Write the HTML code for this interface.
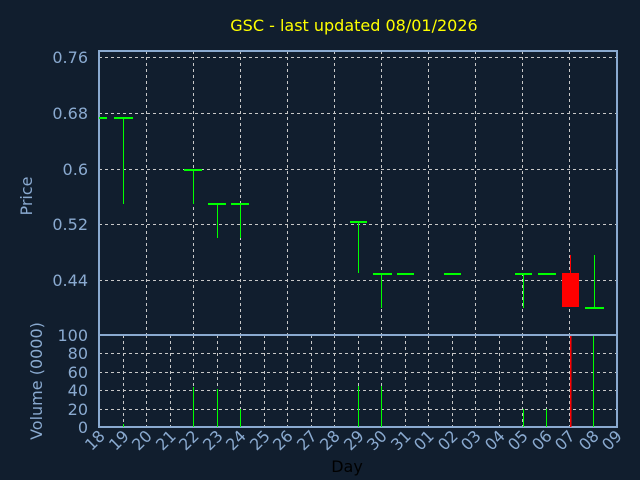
<!DOCTYPE html>
<html><head><meta charset="utf-8"><style>
html,body{margin:0;padding:0;background:#111e2e;}
svg{display:block;font-family:"DejaVu Sans","Liberation Sans",sans-serif;}
</style></head><body>
<svg width="640" height="480" viewBox="0 0 640 480" xmlns="http://www.w3.org/2000/svg">
<rect width="640" height="480" fill="#111e2e"/>
<text x="354" y="31" fill="#ffff00" font-size="16" text-anchor="middle">GSC - last updated 08/01/2026</text>
<g stroke="#c8c8c8" stroke-width="1" stroke-dasharray="3,3" fill="none">
<line x1="99" y1="57.5" x2="617" y2="57.5"/>
<line x1="99" y1="113.5" x2="617" y2="113.5"/>
<line x1="99" y1="169.5" x2="617" y2="169.5"/>
<line x1="99" y1="224.5" x2="617" y2="224.5"/>
<line x1="99" y1="280.5" x2="617" y2="280.5"/>
<line x1="146.5" y1="51" x2="146.5" y2="335"/>
<line x1="193.5" y1="51" x2="193.5" y2="335"/>
<line x1="240.5" y1="51" x2="240.5" y2="335"/>
<line x1="287.5" y1="51" x2="287.5" y2="335"/>
<line x1="334.5" y1="51" x2="334.5" y2="335"/>
<line x1="381.5" y1="51" x2="381.5" y2="335"/>
<line x1="428.5" y1="51" x2="428.5" y2="335"/>
<line x1="475.5" y1="51" x2="475.5" y2="335"/>
<line x1="522.5" y1="51" x2="522.5" y2="335"/>
<line x1="569.5" y1="51" x2="569.5" y2="335"/>
<line x1="99" y1="353.5" x2="617" y2="353.5"/>
<line x1="99" y1="372.5" x2="617" y2="372.5"/>
<line x1="99" y1="390.5" x2="617" y2="390.5"/>
<line x1="99" y1="409.5" x2="617" y2="409.5"/>
<line x1="123.5" y1="335" x2="123.5" y2="427"/><line x1="146.5" y1="335" x2="146.5" y2="427"/><line x1="170.5" y1="335" x2="170.5" y2="427"/><line x1="193.5" y1="335" x2="193.5" y2="427"/><line x1="217.5" y1="335" x2="217.5" y2="427"/><line x1="240.5" y1="335" x2="240.5" y2="427"/><line x1="264.5" y1="335" x2="264.5" y2="427"/><line x1="287.5" y1="335" x2="287.5" y2="427"/><line x1="311.5" y1="335" x2="311.5" y2="427"/><line x1="334.5" y1="335" x2="334.5" y2="427"/><line x1="358.5" y1="335" x2="358.5" y2="427"/><line x1="381.5" y1="335" x2="381.5" y2="427"/><line x1="405.5" y1="335" x2="405.5" y2="427"/><line x1="428.5" y1="335" x2="428.5" y2="427"/><line x1="452.5" y1="335" x2="452.5" y2="427"/><line x1="475.5" y1="335" x2="475.5" y2="427"/><line x1="499.5" y1="335" x2="499.5" y2="427"/><line x1="522.5" y1="335" x2="522.5" y2="427"/><line x1="546.5" y1="335" x2="546.5" y2="427"/><line x1="569.5" y1="335" x2="569.5" y2="427"/><line x1="593.5" y1="335" x2="593.5" y2="427"/>
</g>
<g stroke="#8aaad0" stroke-width="2" fill="none">
<rect x="99" y="51" width="518" height="376"/>
<line x1="99" y1="335" x2="617" y2="335"/>
</g>
<g fill="#00ff00">
<!-- candles -->
<rect x="99" y="117" width="8" height="2"/>
<rect x="114" y="117" width="19" height="2"/><rect x="123" y="118" width="1" height="86"/>
<rect x="184" y="169" width="18" height="2"/><rect x="193" y="170" width="1" height="34"/>
<rect x="208" y="203" width="18" height="2"/><rect x="217" y="204" width="1" height="34"/>
<rect x="231" y="203" width="18" height="2"/><rect x="240" y="204" width="1" height="34"/>
<rect x="350" y="221" width="17" height="2"/><rect x="358" y="222" width="1" height="51"/>
<rect x="373" y="273" width="19" height="2"/><rect x="381" y="274" width="1" height="34"/>
<rect x="397" y="273" width="17" height="2"/>
<rect x="444" y="273" width="17" height="2"/>
<rect x="515" y="273" width="17" height="2"/><rect x="523" y="274" width="1" height="34"/>
<rect x="538" y="273" width="18" height="2"/>
<rect x="585" y="307" width="19" height="2"/><rect x="594" y="255" width="1" height="52"/>
<!-- volume -->
<rect x="123" y="424" width="1" height="3"/>
<rect x="193" y="387" width="1" height="40"/>
<rect x="217" y="389" width="1" height="38"/>
<rect x="240" y="409" width="1" height="18"/>
<rect x="358" y="386" width="1" height="41"/>
<rect x="381" y="386" width="1" height="41"/>
<rect x="523" y="409" width="1" height="18"/>
<rect x="546" y="409" width="1" height="18"/>
<rect x="593" y="336" width="1" height="91"/>
</g>
<g fill="#ff0000">
<rect x="570" y="255" width="1" height="18"/>
<rect x="562" y="273" width="17" height="34"/>
<rect x="570" y="336" width="1.5" height="91"/>
</g>
<g fill="#8aaad0" font-size="16" text-anchor="end">
<text x="88" y="63">0.76</text>
<text x="88" y="119">0.68</text>
<text x="88" y="175">0.6</text>
<text x="88" y="230">0.52</text>
<text x="88" y="286">0.44</text>
<text x="88" y="341">100</text>
<text x="88" y="359">80</text>
<text x="88" y="378">60</text>
<text x="88" y="396">40</text>
<text x="88" y="415">20</text>
<text x="88" y="433">0</text>
</g>
<g fill="#8aaad0" font-size="16" text-anchor="middle">
<text transform="translate(32,196) rotate(-90)">Price</text>
<text transform="translate(42,381) rotate(-90)">Volume (0000)</text>
</g>
<g fill="#8aaad0" font-size="16" text-anchor="end">
<text transform="translate(106,437) rotate(-45)">18</text>
<text transform="translate(130,437) rotate(-45)">19</text>
<text transform="translate(153,437) rotate(-45)">20</text>
<text transform="translate(177,437) rotate(-45)">21</text>
<text transform="translate(200,437) rotate(-45)">22</text>
<text transform="translate(224,437) rotate(-45)">23</text>
<text transform="translate(247,437) rotate(-45)">24</text>
<text transform="translate(271,437) rotate(-45)">25</text>
<text transform="translate(294,437) rotate(-45)">26</text>
<text transform="translate(318,437) rotate(-45)">27</text>
<text transform="translate(341,437) rotate(-45)">28</text>
<text transform="translate(365,437) rotate(-45)">29</text>
<text transform="translate(388,437) rotate(-45)">30</text>
<text transform="translate(412,437) rotate(-45)">31</text>
<text transform="translate(435,437) rotate(-45)">01</text>
<text transform="translate(459,437) rotate(-45)">02</text>
<text transform="translate(482,437) rotate(-45)">03</text>
<text transform="translate(506,437) rotate(-45)">04</text>
<text transform="translate(529,437) rotate(-45)">05</text>
<text transform="translate(553,437) rotate(-45)">06</text>
<text transform="translate(576,437) rotate(-45)">07</text>
<text transform="translate(600,437) rotate(-45)">08</text>
<text transform="translate(623,437) rotate(-45)">09</text>
</g>
<text x="347" y="472" fill="#000000" font-size="16" text-anchor="middle">Day</text>
</svg>
</body></html>
